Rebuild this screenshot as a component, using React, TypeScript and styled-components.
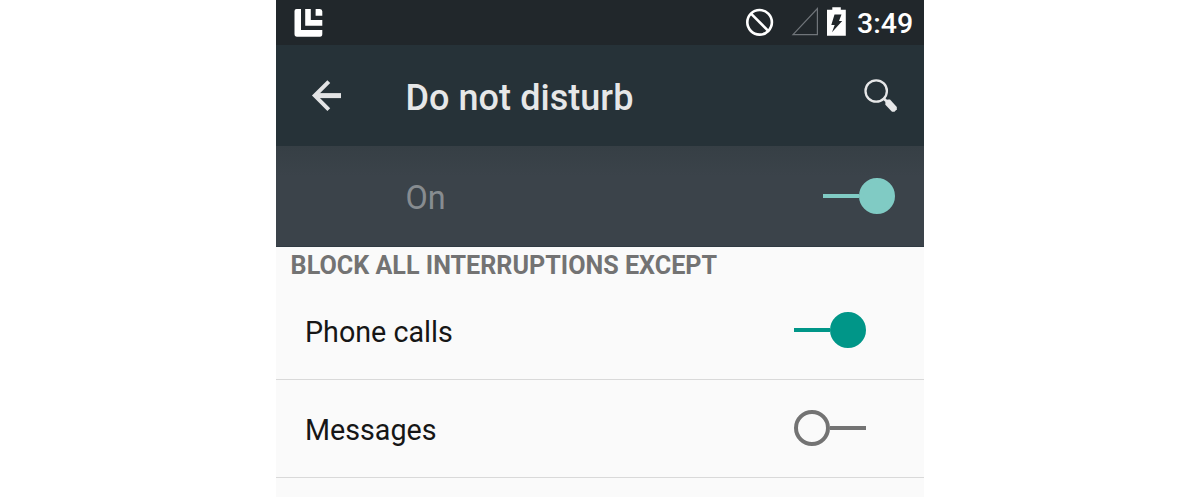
import React from "react";
import styled, { createGlobalStyle } from "styled-components";

const GlobalStyle = createGlobalStyle`
  html, body { margin: 0; background: #fff; }
  body { overflow: hidden; font-family: Roboto, "Liberation Sans", sans-serif; }
  * { box-sizing: border-box; }
`;

const Page = styled.div`
  display: flex;
  justify-content: center;
  height: 497px;
`;

const Screen = styled.main`
  display: flex;
  flex-direction: column;
  width: 648px;
  height: 497px;
  overflow: hidden;
  background: #fafafa;
`;

const StatusBar = styled.div`
  display: flex;
  flex: none;
  justify-content: space-between;
  height: 45px;
  background: #21272b;
`;

const StatusIcons = styled.div`
  display: flex;
`;

const Clock = styled.time`
  width: 67px;
  font-size: 28.5px;
  font-weight: 500;
  line-height: 48px;
  color: #fff;
  white-space: nowrap;
`;

const Toolbar = styled.header`
  display: flex;
  flex: none;
  align-items: center;
  height: 101px;
  padding: 0 21px 0 30px;
  background: #263238;
`;

const IconButton = styled.button`
  display: flex;
  padding: 0;
  border: 0;
  background: none;
`;

const Title = styled.h1`
  flex: 1;
  margin: 0 0 0 59.5px;
  padding-top: 5px;
  font-size: 36px;
  font-weight: 500;
  letter-spacing: 0.05px;
  line-height: 42px;
  color: #e6e7e8;
`;

const MasterRow = styled.section`
  display: flex;
  flex: none;
  align-items: center;
  justify-content: space-between;
  height: 101px;
  padding: 0 29px 0 129.5px;
  border-bottom: 1px solid #303a42;
  background: linear-gradient(#363f45, #3b434a 30%);
`;

const MasterLabel = styled.span`
  padding-top: 4px;
  font-size: 32.4px;
  line-height: 40px;
  color: #878c90;
`;

const SectionTitle = styled.h2`
  flex: none;
  height: 35px;
  margin: 0;
  padding-left: 14.6px;
  font-size: 25.15px;
  font-weight: 700;
  line-height: 37px;
  color: #737373;
  white-space: nowrap;
`;

const Row = styled.div`
  display: flex;
  flex: none;
  align-items: center;
  justify-content: space-between;
  height: 98px;
  padding: 0 58px 1px 29px;
  border-bottom: 1px solid #d9d9d9;
`;

const RowLabel = styled.span`
  padding-top: 4px;
  font-size: 28.7px;
  line-height: 36px;
  color: #161616;
`;

const Toggle = styled.button<{ $on: boolean; $color: string }>`
  display: flex;
  flex-direction: ${(p) => (p.$on ? "row" : "row-reverse")};
  align-items: center;
  width: 72px;
  height: 36px;
  padding: 0;
  border: 0;
  background: none;
  color: ${(p) => p.$color};
`;

const Track = styled.span`
  flex: 1;
  height: 4px;
  background: currentColor;
`;

const Thumb = styled.span<{ $on: boolean }>`
  width: 36px;
  height: 36px;
  border: 4px solid currentColor;
  border-radius: 50%;
  background: ${(p) => (p.$on ? "currentColor" : "transparent")};
`;

function Switch({ on, color, label }: { on: boolean; color: string; label: string }) {
  return (
    <Toggle $on={on} $color={color} role="switch" aria-checked={on} aria-label={label}>
      <Track />
      <Thumb $on={on} />
    </Toggle>
  );
}

function AppLogo() {
  return (
    <svg width="60" height="45" fill="#fff">
      <path d="M20.5 9H25V30H46.3V34Q46.3 36.7 44 36.7H21Q18.5 36.7 18.5 34V11Q18.5 9 20.5 9Z" />
      <path d="M29.2 9H34.8V19.9H46.3V25.7H29.2Z" />
      <path d="M39.6 9H44Q46.3 9 46.3 11.5V15.7H39.6Z" />
    </svg>
  );
}

function BlockedIcon() {
  return (
    <svg width="44" height="45" fill="none" stroke="#fff" strokeWidth="2.6">
      <circle cx="15.6" cy="22.3" r="12.3" />
      <path d="M7 13.7 24.2 30.9" />
    </svg>
  );
}

function SignalIcon() {
  return (
    <svg width="37" height="45" fill="none" stroke="#70757a" strokeWidth="1.2">
      <path d="M29.4 8.5V34.7H5Z" />
    </svg>
  );
}

function BatteryIcon() {
  return (
    <svg width="32" height="45">
      <path fill="#fff" d="M7.3 7.2H15.8V9.7H20.8V35.7H2V9.7H7.3Z" />
      <path fill="#21272b" d="M9.5 14.6H16.5L14 21H17.2L7 32.3 9.7 25H6.3Z" />
    </svg>
  );
}

function BackIcon() {
  return (
    <svg width="40" height="40" fill="none" stroke="#e3e4e5" strokeWidth="4">
      <path d="M22.8 5.6 8.8 19.6 22.8 33.6" />
      <path strokeWidth="5" d="M10 19.6H35" />
    </svg>
  );
}

function SearchIcon() {
  return (
    <svg width="40" height="40" fill="none" stroke="#e6e7e8">
      <circle cx="13.2" cy="15" r="10.7" strokeWidth="2.3" />
      <path strokeWidth="2.6" d="M20.4 22.2 25 26.5" />
      <path fill="#e6e7e8" stroke="none" d="M24.5 23.6H27L33.8 31V33.2L31.5 35.8H29L22.4 28.7V26Z" />
    </svg>
  );
}

export default function App() {
  return (
    <Page>
      <GlobalStyle />
      <Screen>
        <StatusBar>
          <AppLogo />
          <StatusIcons>
            <BlockedIcon />
            <SignalIcon />
            <BatteryIcon />
            <Clock>3:49</Clock>
          </StatusIcons>
        </StatusBar>
        <Toolbar>
          <IconButton aria-label="Back"><BackIcon /></IconButton>
          <Title>Do not disturb</Title>
          <IconButton aria-label="Search"><SearchIcon /></IconButton>
        </Toolbar>
        <MasterRow>
          <MasterLabel>On</MasterLabel>
          <Switch on color="#80cbc4" label="Do not disturb" />
        </MasterRow>
        <SectionTitle>BLOCK ALL INTERRUPTIONS EXCEPT</SectionTitle>
        <Row>
          <RowLabel>Phone calls</RowLabel>
          <Switch on color="#009688" label="Phone calls" />
        </Row>
        <Row>
          <RowLabel>Messages</RowLabel>
          <Switch on={false} color="#737373" label="Messages" />
        </Row>
      </Screen>
    </Page>
  );
}
